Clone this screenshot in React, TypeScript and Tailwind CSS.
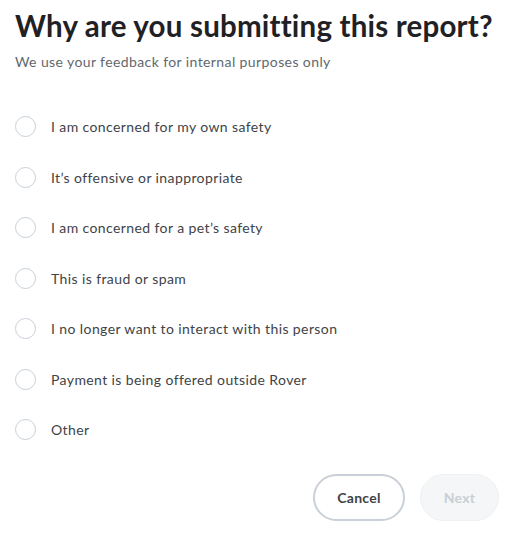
import React from "react";

const options = [
  "I am concerned for my own safety",
  "It\u2019s offensive or inappropriate",
  "I am concerned for a pet\u2019s safety",
  "This is fraud or spam",
  "I no longer want to interact with this person",
  "Payment is being offered outside Rover",
  "Other",
];

export default function App() {
  return (
    <div
      className="w-[515px] h-[540px] bg-white px-[15px] pt-[6px] text-[#1f2124]"
      style={{ fontFamily: "Lato, 'Open Sans', sans-serif" }}
    >
      <h1 className="text-[29.5px] leading-[40px] font-bold whitespace-nowrap tracking-[0.2px]">
        Why are you submitting this report?
      </h1>
      <p className="mt-[6px] text-[14px] leading-[20px] text-[#62686e] tracking-[0.4px]">
        We use your feedback for internal purposes only
      </p>
      <div className="mt-[44px] flex flex-col gap-[29.5px]">
        {options.map((o) => (
          <label key={o} className="flex items-center h-[21px] gap-[15px]">
            <span className="w-[21px] h-[21px] rounded-full border border-[#c9d0d8] bg-white shrink-0" />
            <span className="text-[14px] text-[#404347] tracking-[0.4px]">{o}</span>
          </label>
        ))}
      </div>
      <div className="mt-[34px] flex justify-end gap-[15px] pr-[1px]">
        <button className="w-[92px] h-[47px] rounded-full border-2 border-[#c9d0d8] bg-white text-[14px] font-bold text-[#404347] tracking-[0.3px]">
          Cancel
        </button>
        <button className="w-[79px] h-[47px] rounded-full border border-[#eef0f2] bg-[#f5f6f7] text-[14px] font-bold text-[#c9cfd4] tracking-[0.3px]">
          Next
        </button>
      </div>
    </div>
  );
}
